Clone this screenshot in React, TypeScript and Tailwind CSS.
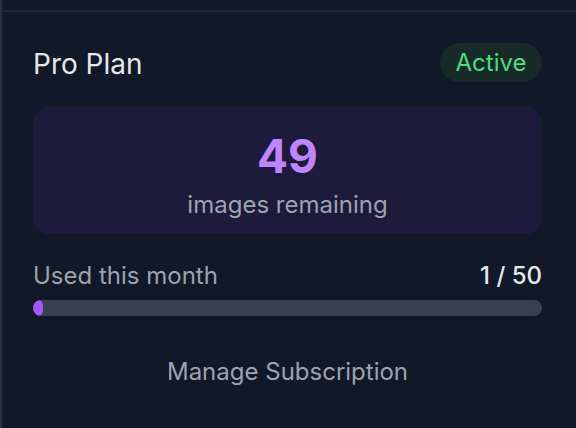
import React from "react";

export default function App() {
  return (
    <div
      className="w-[576px] h-[428px] bg-[#111827] overflow-hidden border-l-2 border-[#2a2f3a]"
      style={{ fontFamily: "Inter, 'Noto Sans', sans-serif" }}
    >
      <div className="h-[10px]" />
      <div className="border-t-2 border-[#1c2230] pl-[31px] pr-[34px]">
        <div className="flex items-center justify-between mt-[31px] h-[39px]">
          <span className="text-[28px] leading-none text-[#e5e7eb] pt-[2px]">Pro Plan</span>
          <span className="h-[39px] w-[102px] rounded-full bg-[#172a28] text-[#4ade80] text-[24px] leading-none flex items-center justify-center">
            Active
          </span>
        </div>
        <div className="mt-[25px] h-[127px] rounded-[16px] bg-[#1e1a3b] flex flex-col items-center pt-[26px]">
          <span className="text-[46px] leading-none font-bold text-[#c084fc]">49</span>
          <span className="mt-[14px] text-[24px] leading-none text-[#9ca3af]">images remaining</span>
        </div>
        <div className="mt-[30px] flex items-center justify-between">
          <span className="text-[24px] leading-none text-[#9ca3af]">Used this month</span>
          <span className="text-[24px] leading-none font-medium text-[#e5e7eb]">1 / 50</span>
        </div>
        <div className="mt-[12px] h-[16px] rounded-full bg-[#374151] overflow-hidden">
          <div className="h-full rounded-full bg-[#a855f7]" style={{ width: "2%" }} />
        </div>
        <div className="mt-[44px] text-center text-[24px] leading-none text-[#9ca3af]">
          Manage Subscription
        </div>
      </div>
    </div>
  );
}
